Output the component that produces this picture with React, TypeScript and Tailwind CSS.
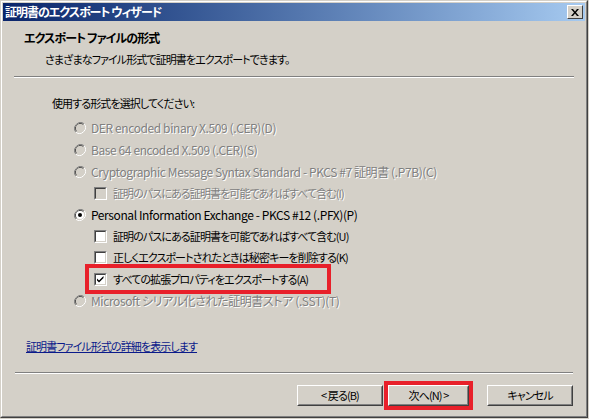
import React from "react";

const font = "font-['MS_UI_Gothic','Noto_Sans_CJK_JP',sans-serif] [font-feature-settings:'palt']";
const jp = "text-[11px] tracking-[-0.9px]";
const emboss = "text-[#808080] [text-shadow:1px_1px_0_#ffffff]";

function Radio({ checked, disabled }: { checked?: boolean; disabled?: boolean }) {
  return (
    <svg width="12" height="12" viewBox="0 0 12 12" className="shrink-0">
      <path d="M10.2 1.8A6 6 0 0 0 1.8 10.2" fill="none" stroke="#808080" strokeWidth="1" />
      <path d="M9.5 2.5A5 5 0 0 0 2.5 9.5" fill="none" stroke="#404040" strokeWidth="1" />
      <path d="M1.8 10.2A6 6 0 0 0 10.2 1.8" fill="none" stroke="#ffffff" strokeWidth="1" />
      <path d="M2.5 9.5A5 5 0 0 0 9.5 2.5" fill="none" stroke="#d4d0c8" strokeWidth="1" />
      <circle cx="6" cy="6" r="4" fill={disabled ? "#d4d0c8" : "#ffffff"} />
      {checked && <circle cx="6" cy="6" r="2" fill="#000" />}
    </svg>
  );
}

function Check({ checked, disabled }: { checked?: boolean; disabled?: boolean }) {
  return (
    <div className="w-[13px] h-[13px] shrink-0 border-t border-l border-t-[#808080] border-l-[#808080] border-b border-r border-b-white border-r-white">
      <div className={`w-full h-full border-t border-l border-t-[#404040] border-l-[#404040] border-b border-r border-b-[#d4d0c8] border-r-[#d4d0c8] ${disabled ? "bg-[#d4d0c8]" : "bg-white"}`}>
        {checked && (
          <svg width="9" height="9" viewBox="0 0 9 9">
            <path d="M1 3.5 L3 5.5 L7.5 1 L7.5 3 L3 7.5 L1 5.5 Z" fill="#000" />
          </svg>
        )}
      </div>
    </div>
  );
}

function Btn({ children, w }: { children: React.ReactNode; w: string }) {
  return (
    <div className={`${w} h-[21px] border border-t-white border-l-white border-r-[#404040] border-b-[#404040]`}>
      <div className={`w-full h-full flex items-center justify-center border border-t-[#d4d0c8] border-l-[#d4d0c8] border-r-[#808080] border-b-[#808080] text-black ${jp}`}>
        {children}
      </div>
    </div>
  );
}

export default function App() {
  return (
    <div className={`w-[589px] h-[419px] bg-[#d4d0c8] ${font} text-[12px] tracking-[-0.4px] leading-none overflow-hidden`}>
      <div className="w-[588px] h-[418px] border border-t-[#d4d0c8] border-l-[#d4d0c8] border-r-[#404040] border-b-[#404040]">
        <div className="w-full h-full border border-t-white border-l-white border-r-[#808080] border-b-[#808080] flex flex-col px-[1px] pt-[1px]">
          {/* title bar */}
          <div className="h-[18px] flex items-center justify-between bg-gradient-to-r from-[#0a246a] to-[#a6caf0] pl-[2px] pr-[2px]">
            <span className="text-white font-bold text-[12px] tracking-[-1px]">証明書のエクスポート ウィザード</span>
            <div className="w-[16px] h-[14px] bg-[#d4d0c8] border border-t-white border-l-white border-r-[#404040] border-b-[#404040] flex items-center justify-center">
              <svg width="8" height="7" viewBox="0 0 8 7">
                <path d="M0 0h2l2 2.5L6 0h2L5 3.5 8 7H6L4 4.5 2 7H0l3-3.5z" fill="#000" />
              </svg>
            </div>
          </div>

          {/* header */}
          <div className="h-[55px] flex flex-col pl-[21px] pt-[11px]">
            <span className="font-bold text-[12px] tracking-[-0.9px] text-black">エクスポート ファイルの形式</span>
            <span className={`mt-[10px] pl-[21px] text-black ${jp}`}>さまざまなファイル形式で証明書をエクスポートできます。</span>
          </div>
          <div className="mx-[11px] border-t border-t-[#808080] border-b border-b-white" />

          {/* body */}
          <div className="flex-1 flex flex-col pl-[49px] pt-[20px]">
            <span className={`text-black ${jp}`}>使用する形式を選択してください:</span>
            <div className="mt-[8px] flex flex-col pl-[22px]">
              <div className="h-[22px] flex items-center gap-[5px]">
                <Radio disabled />
                <span className={emboss}>DER encoded binary X.509 (.CER)(D)</span>
              </div>
              <div className="h-[22px] flex items-center gap-[5px]">
                <Radio disabled />
                <span className={emboss}>Base 64 encoded X.509 (.CER)(S)</span>
              </div>
              <div className="h-[22px] flex items-center gap-[5px]">
                <Radio disabled />
                <span className={emboss}>Cryptographic Message Syntax Standard - PKCS #7 証明書 (.P7B)(C)</span>
              </div>
              <div className="h-[21px] flex items-center gap-[6px] pl-[20px]">
                <Check disabled />
                <span className={`${emboss} ${jp}`}>証明のパスにある証明書を可能であればすべて含む(I)</span>
              </div>
              <div className="h-[21px] flex items-center gap-[5px]">
                <Radio checked />
                <span className="text-black">Personal Information Exchange - PKCS #12 (.PFX)(P)</span>
              </div>
              <div className="h-[22px] flex items-center gap-[6px] pl-[20px]">
                <Check />
                <span className={`text-black ${jp}`}>証明のパスにある証明書を可能であればすべて含む(U)</span>
              </div>
              <div className="h-[21px] flex items-center gap-[6px] pl-[20px]">
                <Check />
                <span className={`text-black ${jp}`}>正しくエクスポートされたときは秘密キーを削除する(K)</span>
              </div>
              <div className="h-[22px] flex items-center pl-[11px]">
                <div className="h-[30px] w-[246px] border-[4px] border-[#e8202a] flex items-center gap-[6px] pl-[5px] whitespace-nowrap">
                  <Check checked />
                  <span className={`text-black ${jp}`}>すべての拡張プロパティをエクスポートする(A)</span>
                </div>
              </div>
              <div className="h-[22px] flex items-center gap-[5px]">
                <Radio disabled />
                <span className={emboss}>Microsoft シリアル化された証明書ストア (.SST)(T)</span>
              </div>
            </div>
          </div>

          <div className="pl-[23px] pb-[20px]">
            <span className={`text-[#0a1a8a] underline ${jp}`}>証明書ファイル形式の詳細を表示します</span>
          </div>
          <div className="mx-[12px] border-t border-t-[#808080] border-b border-b-white" />

          {/* buttons */}
          <div className="h-[42px] flex items-center justify-end pr-[12px]">
            <Btn w="w-[86px]">&lt; 戻る(B)</Btn>
            <div className="ml-[1px] border-[4px] border-[#e8202a]">
              <Btn w="w-[81px]">次へ(N) &gt;</Btn>
            </div>
            <div className="ml-[14px]">
              <Btn w="w-[86px]">キャンセル</Btn>
            </div>
          </div>
        </div>
      </div>
    </div>
  );
}
